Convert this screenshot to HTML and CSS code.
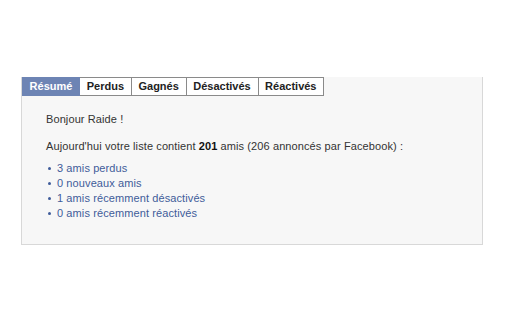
FILE: index.html
```html
<!DOCTYPE html>
<html lang="fr">
<head>
<meta charset="utf-8">
<link rel="stylesheet" href="styles.css">
</head>
<body>
<div class="panel">
  <div class="tabs">
    <span class="tab active">Résumé</span>
    <span class="tab">Perdus</span>
    <span class="tab">Gagnés</span>
    <span class="tab">Désactivés</span>
    <span class="tab">Réactivés</span>
  </div>
  <div class="content">
    <p class="hello">Bonjour Raide !</p>
    <p class="summary">Aujourd'hui votre liste contient <b>201</b> amis (206 annoncés par Facebook) :</p>
    <ul class="stats">
      <li>3 amis perdus</li>
      <li>0 nouveaux amis</li>
      <li>1 amis récemment désactivés</li>
      <li>0 amis récemment réactivés</li>
    </ul>
  </div>
</div>
</body>
</html>
```
FILE: styles.css
```css
html, body {
  margin: 0;
  padding: 0;
  background: #ffffff;
}
body {
  font-family: "Liberation Sans", Arial, sans-serif;
  font-size: 11px;
  color: #333333;
}
.panel {
  margin: 77px 0 0 21px;
  width: 460px;
  height: 167px;
  background: #f7f7f7;
  border: 1px solid #d8d8d8;
  border-top: none;
}
.tabs {
  display: flex;
}
.tab {
  font-weight: bold;
  font-size: 11px;
  color: #222222;
  background: #ffffff;
  border: 1px solid #8a8a8a;
  border-left: none;
  height: 17px;
  line-height: 17px;
  padding: 0 6.8px 0 6.6px;
}
.tab.active {
  background: #6d84b4;
  color: #ffffff;
  border-color: #6d84b4;
  border-left: 1px solid #6d84b4;
}
.content {
  padding: 0 24px;
  letter-spacing: 0.1px;
}
.hello {
  margin: 16px 0 0;
  line-height: 15px;
}
.summary {
  margin: 12px 0 0;
  line-height: 15px;
}
.summary b {
  color: #111111;
}
.stats {
  margin: 7px 0 0;
  padding: 0 0 0 11px;
  list-style: none;
}
.stats li {
  position: relative;
  line-height: 15px;
  color: #3f5c9a;
}
.stats li::before {
  content: "";
  position: absolute;
  left: -9px;
  top: 6px;
  width: 3px;
  height: 3px;
  border-radius: 50%;
  background: #3f5c9a;
}
```
